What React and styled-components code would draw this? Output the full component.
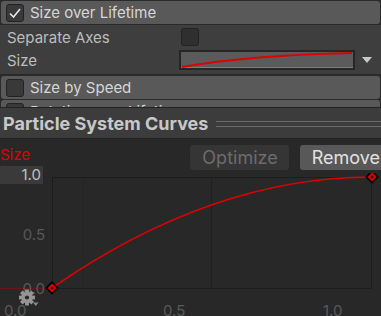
import React from 'react';
import styled, {createGlobalStyle} from 'styled-components';

const GlobalStyle = createGlobalStyle`
  html, body {
    margin: 0;
    padding: 0;
    background: #282828;
  }
  * { box-sizing: border-box; }
`;

const modules = [
  {name: 'Size over Lifetime', checked: true, open: true},
  {name: 'Size by Speed', checked: false},
  {name: 'Rotation over Lifetime', checked: false},
];

export default function App() {
  return (
    <>
      <GlobalStyle/>
      <Page>
        <ModuleList>
          {modules.map(m => (
            <React.Fragment key={m.name}>
              <ModuleHeader>
                <Checkbox checked={m.checked}>
                  {m.checked && <CheckMark/>}
                </Checkbox>
                <ModuleTitle>{m.name}</ModuleTitle>
              </ModuleHeader>
              {m.open && (
                <ModuleBody>
                  <Row>
                    <Label>Separate Axes</Label>
                    <Checkbox dark/>
                  </Row>
                  <Row>
                    <Label>Size</Label>
                    <CurveField>
                      <svg width="172" height="16" viewBox="0 0 172 16">
                        <path d="M1 15 Q70 3 171 1" fill="none" stroke="#e00000" strokeWidth="2"/>
                      </svg>
                    </CurveField>
                    <DropArrow/>
                  </Row>
                </ModuleBody>
              )}
            </React.Fragment>
          ))}
        </ModuleList>

        <CurvesHeader>
          <CurvesTitle>Particle System Curves</CurvesTitle>
          <Grip/>
        </CurvesHeader>

        <Editor>
          <Toolbar>
            <CurveName>Size</CurveName>
            <ToolButton disabled>Optimize</ToolButton>
            <ToolButton>Remove</ToolButton>
          </Toolbar>
          <Chart>
            <MaxField>1.0</MaxField>
            <svg width="381" height="143" viewBox="0 0 381 143">
              <line x1="83.5" y1="4" x2="83.5" y2="115" stroke="#242424"/>
              <line x1="211.5" y1="4" x2="211.5" y2="115" stroke="#202020"/>
              <rect x="52.5" y="4.5" width="319" height="111" fill="none" stroke="#1d1d1d"/>
              <line x1="0" y1="115.5" x2="52" y2="115.5" stroke="#6e1414"/>
              <g fill="#585858" fontFamily="Inter, 'Noto Sans', sans-serif" fontSize="15">
                <text x="45" y="67" textAnchor="end">0.5</text>
                <text x="45" y="121" textAnchor="end">0.0</text>
                <text x="4" y="143">0.0</text>
                <text x="163" y="143">0.5</text>
                <text x="323" y="143">1.0</text>
              </g>
              <path d="M52 115 Q212 4 372 4" fill="none" stroke="#e20000" strokeWidth="1.6"/>
              <Key x={52} y={115}/>
              <Key x={372} y={4}/>
              <g transform="translate(27 124.5)">
                <Gear/>
              </g>
              <path d="M33 129.5 L38.5 129.5 L35.75 133 Z" fill="#8a8a8a"/>
            </svg>
          </Chart>
        </Editor>
      </Page>
    </>
  );
}

const Key = ({x, y}) => (
  <g transform={`translate(${x} ${y}) rotate(45)`}>
    <rect x="-4" y="-4" width="8" height="8" fill="#e00000" stroke="#000" strokeWidth="1.6"/>
    <rect x="-1.2" y="-1.2" width="2.4" height="2.4" fill="#300"/>
  </g>
);

const Gear = () => {
  const teeth = [0, 45, 90, 135, 180, 225, 270, 315];
  return (
    <g fill="#959595">
      {teeth.map(a => (
        <rect key={a} x="-1.9" y="-8" width="3.8" height="4.5" transform={`rotate(${a})`}/>
      ))}
      <circle r="5.6"/>
      <circle r="2.1" fill="#282828"/>
    </g>
  );
};

const CheckMark = () => (
  <svg width="14" height="14" viewBox="0 0 14 14">
    <path d="M2 7.5 L5.5 11 L12 3" fill="none" stroke="#e6e6e6" strokeWidth="1.6"/>
  </svg>
);

const Page = styled.div`
  width: 381px;
  height: 316px;
  overflow: hidden;
  display: flex;
  flex-direction: column;
  font-family: Inter, "Noto Sans", sans-serif;
  background: #282828;
`;

const ModuleList = styled.div`
  height: 107px;
  overflow: hidden;
  flex-shrink: 0;
  background: #2a2a2a;
  padding-top: 1px;
  display: flex;
  flex-direction: column;
  gap: 1px;
`;

const ModuleHeader = styled.div`
  height: 23px;
  flex-shrink: 0;
  display: flex;
  align-items: center;
  gap: 6px;
  padding-left: 5px;
  margin: 0 1px;
  background: #595959;
  border-radius: 3px;
`;

const Checkbox = styled.div`
  width: 18px;
  height: 18px;
  flex-shrink: 0;
  display: flex;
  align-items: center;
  justify-content: center;
  border-radius: 3px;
  background: ${p => p.dark ? '#2f2f2f' : '#393939'};
  border: 1px solid #222;
`;

const ModuleTitle = styled.span`
  font-size: 15px;
  color: #d6d6d6;
`;

const ModuleBody = styled.div`
  height: 50px;
  flex-shrink: 0;
  background: #3e3e3e;
  display: flex;
  flex-direction: column;
  justify-content: center;
  padding: 0 0 2px 7px;
  border-bottom: 1px solid #2a2a2a;
`;

const Row = styled.div`
  height: 23px;
  display: grid;
  grid-template-columns: 174px 174px 1fr;
  align-items: center;
`;

const Label = styled.span`
  font-size: 15px;
  color: #bdbdbd;
`;

const CurveField = styled.div`
  height: 20px;
  margin-left: -2px;
  border: 2px solid #262626;
  background: #5b5b5b;
  box-shadow: inset 0 -1px 0 #7c7c7c;
  display: flex;
  align-items: center;
  overflow: hidden;
`;

const DropArrow = styled.div`
  justify-self: start;
  margin-left: 7px;
  width: 0;
  height: 0;
  border-left: 5px solid transparent;
  border-right: 5px solid transparent;
  border-top: 6px solid #c8c8c8;
`;

const CurvesHeader = styled.div`
  height: 32px;
  flex-shrink: 0;
  display: flex;
  align-items: center;
  gap: 8px;
  padding-left: 3px;
  background: #3c3c3c;
  border-top: 1px solid #232323;
  border-bottom: 1px solid #232323;
`;

const CurvesTitle = styled.span`
  font-size: 18px;
  font-weight: 700;
  color: #c8c8c8;
  white-space: nowrap;
`;

const Grip = styled.div`
  flex: 1;
  height: 6px;
  border-top: 1px solid #6a6a6a;
  border-bottom: 1px solid #6a6a6a;
  margin-top: 1px;
`;

const Editor = styled.div`
  flex: 1;
  display: flex;
  flex-direction: column;
  background: #282828;
`;

const Toolbar = styled.div`
  height: 34px;
  display: flex;
  align-items: flex-start;
  padding-top: 6px;
  gap: 11px;
`;

const CurveName = styled.span`
  font-size: 15px;
  color: #e00000;
  margin-right: auto;
  line-height: 20px;
`;

const ToolButton = styled.div`
  height: 25px;
  padding: 0 11px 0 12px;
  border-radius: 3px;
  display: flex;
  align-items: center;
  font-size: 18px;
  white-space: nowrap;
  background: ${p => p.disabled ? '#353535' : '#585858'};
  color: ${p => p.disabled ? '#6c6c6c' : '#e2e2e2'};
  flex-shrink: 0;
  &:last-child {
    margin-right: -10px;
  }
`;

const Chart = styled.div`
  position: relative;
  flex: 1;
  svg { display: block; }
`;

const MaxField = styled.div`
  position: absolute;
  left: 0;
  top: -7px;
  width: 43px;
  height: 18px;
  background: #3a3a3a;
  color: #c0c0c0;
  font-size: 15px;
  text-align: right;
  padding-right: 2px;
  line-height: 18px;
`;
